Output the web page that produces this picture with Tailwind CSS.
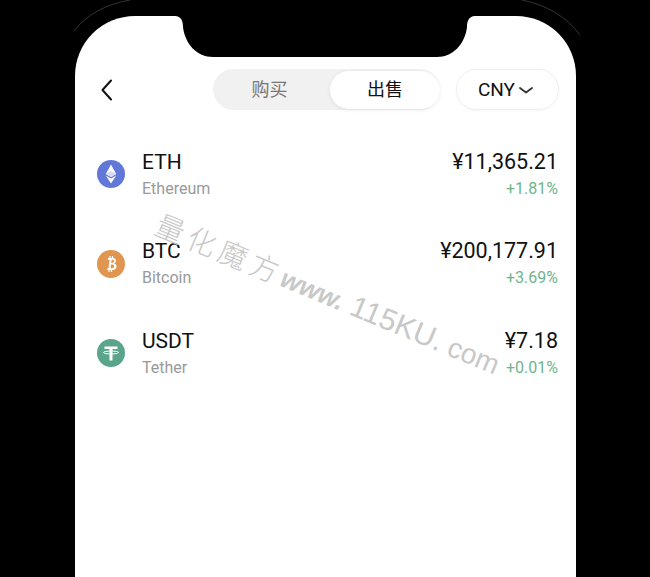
<!DOCTYPE html>
<html lang="en">
<head>
    <meta charset="UTF-8">
    <title>Coins</title>
    <script src="https://cdn.jsdelivr.net/npm/@tailwindcss/browser@4"></script>
</head>
<body class="bg-black h-[577px] w-[650px] overflow-hidden relative font-['Roboto','Noto_Sans_CJK_SC',sans-serif]">
    <!-- thin frame arcs outside the screen corners -->
    <svg class="absolute left-0 top-0" width="650" height="60" fill="none" stroke="#333" stroke-width="1">
        <path d="M74 31 C86 15 106 4 130 0"/>
        <path d="M580 35 C566 16 546 5 522 0"/>
    </svg>

    <div class="relative ml-[75px] mt-[16px] w-[501px] h-[561px] bg-white rounded-t-[60px] overflow-hidden pt-[53px]">
        <!-- notch -->
        <svg class="absolute left-0 top-0" width="501" height="42" fill="#000">
            <path d="M100 0 C106 0 108 5 108 11 C110 28 122 41 138 41 L362 41 C378 41 390 28 392 11 C392 5 394 0 400 0 Z"/>
        </svg>

        <!-- header -->
        <div class="flex items-center h-[41px] pl-[26px] pr-[17px]">
            <svg class="shrink-0" width="12" height="22" viewBox="0 0 12 22" fill="none" stroke="#111" stroke-width="2" stroke-linecap="round" stroke-linejoin="round">
                <path d="M10 1.500 L1.500 11 L10 20.500"/>
            </svg>
            <div class="ml-[100px] w-[227px] h-[41px] rounded-full bg-[#f1f1f1] flex items-center">
                <div class="w-[113px] text-center text-[18px] text-[#777]">购买</div>
                <div class="ml-auto w-[110px] h-[38px] rounded-full bg-white shadow-[0_1px_4px_rgba(0,0,0,0.08)] flex items-center justify-center text-[18px] text-[#111]">出售</div>
            </div>
            <div class="ml-[16px] w-[103px] h-[41px] rounded-full border border-[#eeeeee] shadow-[0_1px_3px_rgba(0,0,0,0.04)] flex items-center justify-center gap-[4px] pr-[4px] pt-[1px] text-[19px] text-[#111]">
                CNY
                <svg width="14" height="7" viewBox="0 0 14 7" fill="none" stroke="#333" stroke-width="1.800" stroke-linecap="round" stroke-linejoin="round">
                    <path d="M1 1 L7 5.500 L13 1"/>
                </svg>
            </div>
        </div>

        <!-- coin list -->
        <div class="mt-[40px] flex flex-col gap-[39.500px] pl-[22px] pr-[18px]">
            <div class="flex items-center h-[50px]">
                <svg class="w-[28px] h-[28px] mb-[2px]" viewBox="0 0 28 28">
                    <circle cx="14" cy="14" r="14" fill="#6178d8"/>
                    <path d="M14 4.500 L8.800 14 L14 17 L19.200 14 Z" fill="#fff"/>
                    <path d="M8.800 15.500 L14 23.500 L19.200 15.500 L14 18.500 Z" fill="#fff"/>
                    <path d="M14 11 L8.800 14 L14 17 L19.200 14 Z" fill="#d5dbf5"/>
                </svg>
                <div class="ml-[17px] flex-1">
                    <div class="text-[21px] leading-[24px] text-[#111]">ETH</div>
                    <div class="mt-[3px] text-[16px] leading-[24px] text-[#999]">Ethereum</div>
                </div>
                <div class="text-right">
                    <div class="text-[21.500px] leading-[24px] text-[#111]">¥11,365.21</div>
                    <div class="mt-[3px] text-[16px] leading-[24px] text-[#6fb48c]">+1.81%</div>
                </div>
            </div>

            <div class="flex items-center h-[50px]">
                <svg class="w-[28px] h-[28px] mb-[2px]" viewBox="0 0 28 28">
                    <circle cx="14" cy="14" r="14" fill="#e09650"/>
                    <path d="M11 8 H15.500 C18 8 19 9.400 19 10.800 C19 12.200 18.200 13 17 13.400 C18.600 13.800 19.500 14.800 19.500 16.400 C19.500 18.400 18 20 15.500 20 H10 L10.600 18.300 H11.500 L12.600 9.700 H10.800 Z M14.600 9.800 L14.200 12.800 H15.400 C16.500 12.800 17 12.100 17 11.200 C17 10.300 16.400 9.800 15.400 9.800 Z M14 14.500 L13.600 18.200 H15.200 C16.500 18.200 17.200 17.400 17.200 16.300 C17.200 15.200 16.500 14.500 15.300 14.500 Z" fill="#fff" fill-rule="evenodd"/>
                    <path d="M13 6 V8 M15.500 6 V8 M12 20 V22 M14.500 20 V22" stroke="#fff" stroke-width="1.200"/>
                </svg>
                <div class="ml-[17px] flex-1">
                    <div class="text-[21px] leading-[24px] text-[#111]">BTC</div>
                    <div class="mt-[3px] text-[16px] leading-[24px] text-[#999]">Bitcoin</div>
                </div>
                <div class="text-right">
                    <div class="text-[21.500px] leading-[24px] text-[#111]">¥200,177.91</div>
                    <div class="mt-[3px] text-[16px] leading-[24px] text-[#6fb48c]">+3.69%</div>
                </div>
            </div>

            <div class="flex items-center h-[50px]">
                <svg class="w-[28px] h-[28px] mb-[2px]" viewBox="0 0 28 28">
                    <circle cx="14" cy="14" r="14" fill="#5aa58c"/>
                    <path d="M7.500 7.500 H20.500 V10 H15.500 V21.500 H12.500 V10 H7.500 Z" fill="#fff"/>
                    <ellipse cx="14" cy="13.500" rx="7.500" ry="1.500" fill="none" stroke="#fff" stroke-width="1"/>
                </svg>
                <div class="ml-[17px] flex-1">
                    <div class="text-[21px] leading-[24px] text-[#111]">USDT</div>
                    <div class="mt-[3px] text-[16px] leading-[24px] text-[#999]">Tether</div>
                </div>
                <div class="text-right">
                    <div class="text-[21.500px] leading-[24px] text-[#111]">¥7.18</div>
                    <div class="mt-[3px] text-[16px] leading-[24px] text-[#6fb48c]">+0.01%</div>
                </div>
            </div>
        </div>
    </div>

    <!-- watermark -->
    <div class="absolute left-[157px] top-[203px] origin-left rotate-[22.500deg] whitespace-nowrap text-[30px] leading-[36px] text-[#c8c8c8] font-['Liberation_Sans','Noto_Sans_CJK_SC',sans-serif]">
        <span class="font-['Noto_Sans_CJK_SC',sans-serif] font-light text-[29px] tracking-[5px]">量化魔方</span><span class="italic font-bold text-[26px]">www.</span><span> 115KU.</span><span class="text-[28px]"> com</span>
    </div>
</body>
</html>
